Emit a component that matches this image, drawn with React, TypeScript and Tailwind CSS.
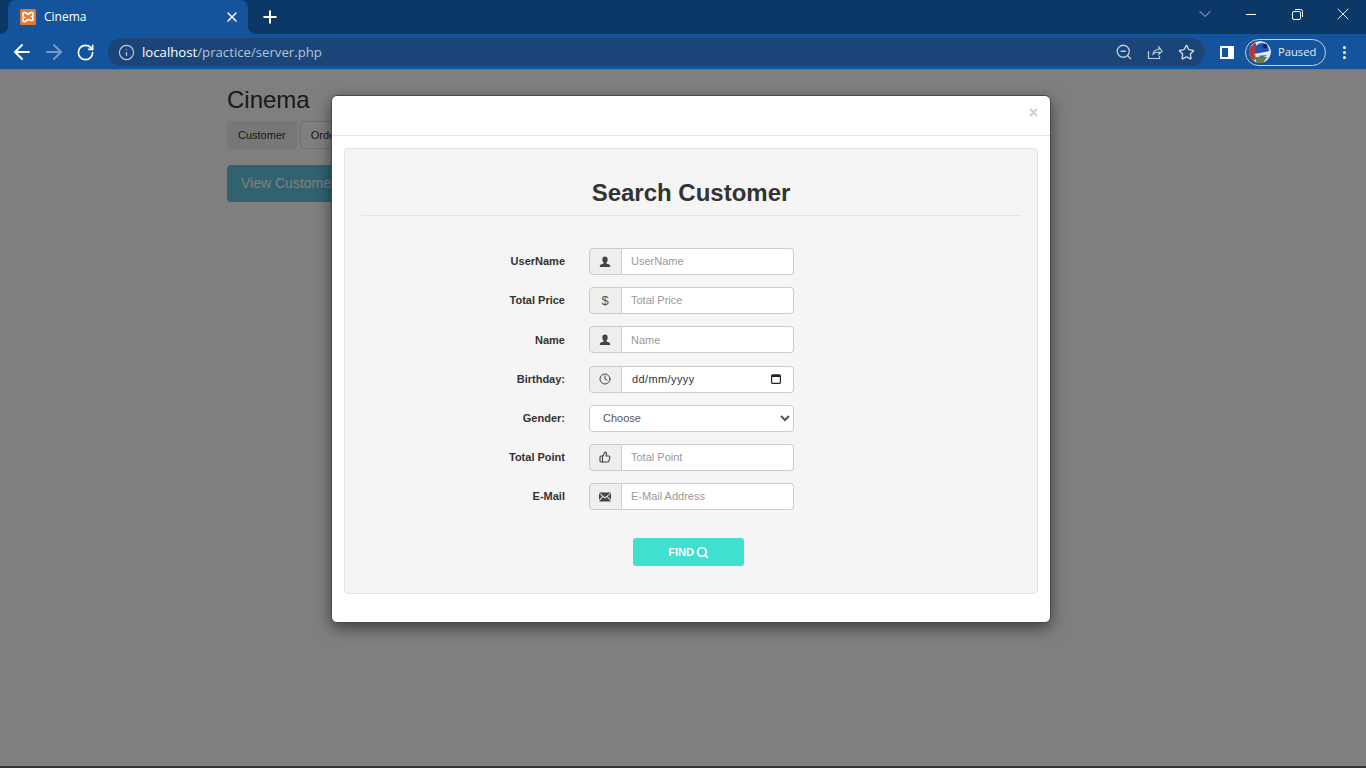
import React from 'react';
import { ArrowLeft, ArrowRight, RotateCw, Info, ZoomOut, Star, ChevronDown, Plus, X, Clock, ThumbsUp, Search } from 'lucide-react';

function UserIcon() {
  return (
    <svg width="12" height="12" viewBox="0 0 12 12" fill="#444">
      <path d="M6 0.5c-1.7 0-2.7 1.2-2.7 2.9 0 1.3.5 2.5 1.3 3.2v.9c-1.4.5-3.6 1-3.8 2.4v1.1h10.4v-1.1c-.2-1.4-2.4-1.9-3.8-2.4v-.9c.8-.7 1.3-1.9 1.3-3.2C8.7 1.7 7.7.5 6 .5z" />
    </svg>
  );
}

function MailIcon() {
  return (
    <svg width="12" height="10" viewBox="0 0 12 10" fill="#444">
      <path d="M0 0.5h12L6 5.2z" />
      <path d="M0 1.6l3.3 2.7L0 8zM12 1.6L8.7 4.3 12 8zM4 4.9l2 1.6 2-1.6L12 9.5H0z" />
    </svg>
  );
}

function CalendarIcon() {
  return (
    <svg width="10" height="10" viewBox="0 0 10 10" fill="none">
      <rect x="0.6" y="0.9" width="8.8" height="8.4" rx="1" stroke="#222" strokeWidth="1.2" />
      <rect x="1" y="1" width="8" height="2" fill="#222" />
    </svg>
  );
}

function Favicon() {
  return (
    <svg width="16" height="16" viewBox="0 0 16 16">
      <rect width="16" height="16" rx="1.5" fill="#e8762b" />
      <path d="M3 4.5c0-1 1.5-1.5 2.5-.8L8 5.5l2.5-1.8c1-.7 2.5-.2 2.5.8v1.5c0 .6-.5 1.2-1.2 1.5.7.3 1.2.9 1.2 1.5v1.5c0 1-1.5 1.5-2.5.8L8 10.5l-2.5 1.8c-1 .7-2.5.2-2.5-.8V10c0-.6.5-1.2 1.2-1.5C3.5 8.2 3 7.6 3 7z" fill="none" stroke="#fff" strokeWidth="1.7" />
    </svg>
  );
}

function Avatar() {
  return (
    <svg width="22" height="22" viewBox="0 0 22 22" className="rounded-full">
      <circle cx="11" cy="11" r="11" fill="#dfe3ea" />
      <path d="M0 8 L6 1 L9 8 L5 20 L0 16z" fill="#b43a32" />
      <circle cx="13" cy="9" r="7" fill="#2350b8" />
      <path d="M5 13 L21 10 L20 14 L7 15z" fill="#e8edf5" />
      <path d="M5 16 L18 16 L14 22 L8 22z" fill="#6d7b3c" />
      <circle cx="16" cy="5" r="2.2" fill="#12245f" />
    </svg>
  );
}

function InputRow({ label, icon, placeholder }: { label: string; icon: React.ReactNode; placeholder: string }) {
  return (
    <div className="flex items-center gap-6">
      <label className="w-[220px] text-right text-[11px] font-bold text-[#333]">{label}</label>
      <div className="flex h-[27px] w-[205px]">
        <span className="flex w-[33px] items-center justify-center rounded-l border border-[#ccc] bg-[#eee] pr-px text-[#555]">{icon}</span>
        <input
          placeholder={placeholder}
          className="min-w-0 flex-1 rounded-r border border-l-0 border-[#ccc] bg-white px-[9px] text-[11px] outline-none placeholder:text-[#999]"
        />
      </div>
    </div>
  );
}

export default function App() {
  return (
    <div className="flex h-screen flex-col overflow-hidden font-['Liberation_Sans',Arial,sans-serif]">
      {/* tab strip */}
      <div className="flex h-[34px] items-end bg-[#0b3866] pl-2">
        <div className="relative flex h-[34px] w-[240px] items-center rounded-t-lg bg-[#14549c] pl-3 pr-[8px] text-white before:absolute before:-left-2 before:bottom-0 before:h-2 before:w-2 before:bg-[radial-gradient(circle_at_0_0,transparent_8px,#14549c_8px)] after:absolute after:-right-2 after:bottom-0 after:h-2 after:w-2 after:bg-[radial-gradient(circle_at_100%_0,transparent_8px,#14549c_8px)]">
          <Favicon />
          <span className="ml-2 flex-1 font-['Open_Sans',sans-serif] text-xs">Cinema</span>
          <X size={16} strokeWidth={2.2} />
        </div>
        <Plus size={20} strokeWidth={2.4} className="mb-[7px] ml-3 text-white" />
        <div className="ml-auto flex h-full items-start">
          <div className="flex h-[28px] w-[46px] items-center justify-center text-[#c9d6e6]"><ChevronDown size={20} strokeWidth={1.1} /></div>
          <div className="flex h-[28px] w-[46px] items-center justify-center"><div className="h-px w-[10px] bg-white" /></div>
          <div className="flex h-[28px] w-[46px] items-center justify-center">
            <svg width="11" height="11" viewBox="0 0 11 11" fill="none" stroke="#fff"><rect x="0.5" y="2.5" width="8" height="8" rx="1.5" /><path d="M3 .5h5.5a2 2 0 0 1 2 2V8" /></svg>
          </div>
          <div className="flex h-[28px] w-[46px] items-center justify-center text-white"><X size={20} strokeWidth={1.1} /></div>
        </div>
      </div>

      {/* toolbar */}
      <div className="flex h-[36px] items-center border-b border-[#5878a4] bg-[#14549c] pt-px text-white">
        <div className="flex w-[108px] items-center pl-[10px]">
          <ArrowLeft size={24} strokeWidth={1.9} />
          <ArrowRight size={24} strokeWidth={1.9} className="ml-2 text-[#7c9ac4]" />
          <RotateCw size={19} strokeWidth={2.1} className="ml-[10px]" />
        </div>
        <div className="flex h-[28px] w-[1097px] items-center rounded-full bg-[#1b4579] pl-[10px] pr-[10px]">
          <Info size={17} strokeWidth={1.7} className="text-[#c0cbd9]" />
          <span className="ml-[7px] flex-1 pt-px font-['Open_Sans',sans-serif] text-[13.2px] text-[#b5c3d6]">
            <span className="font-medium text-white">localhost</span>/practice/server.php
          </span>
          <ZoomOut size={18} strokeWidth={1.7} className="text-[#c0cbd9]" />
          <svg width="16" height="16" viewBox="0 0 16 16" fill="none" stroke="#c0cbd9" strokeWidth="1.2" className="ml-[14px]">
            <path d="M1.5 7v7.5h11V12M6 10c.5-3 3-4.5 6-4.5V3l3 4-3 3.5V8c-2.5 0-4.5.5-6 2z" />
          </svg>
          <Star size={17} strokeWidth={1.8} className="ml-[15px] text-[#d6deea]" />
        </div>
        <div className="ml-[15px] h-[13px] w-[14px] border-[2.5px] border-white bg-[linear-gradient(90deg,#14549c_60%,#fff_60%)]" />
        <div className="ml-[11px] flex h-[27px] w-[81px] items-center rounded-full border border-[#c5d3e6] pl-[3px]">
          <Avatar />
          <span className="ml-[7px] font-['Open_Sans',sans-serif] text-[11.2px] text-[#e4ecf6]">Paused</span>
        </div>
        <div className="ml-[17px] flex flex-col gap-[2px]">
          <i className="h-[3px] w-[3px] rounded-full bg-white" />
          <i className="h-[3px] w-[3px] rounded-full bg-white" />
          <i className="h-[3px] w-[3px] rounded-full bg-white" />
        </div>
      </div>

      {/* page */}
      <div className="relative flex-1 border-b-2 border-[#333] bg-white pl-[227px] pt-4 text-[#333]">
        <h1 className="text-2xl leading-7">Cinema</h1>
        <div className="mt-[7px] flex gap-[3px] text-[11px]">
          <span className="flex h-7 items-center rounded bg-[#eee] px-[11px]">Customer</span>
          <span className="flex h-7 items-center rounded border border-[#ddd] px-[10px]">Order</span>
        </div>
        <button className="mt-4 h-[37px] rounded bg-[#62c4df] px-[14px] pb-[2px] text-sm text-white">View Customer</button>

        {/* modal */}
        <div className="absolute inset-0 flex justify-center bg-black/50 pl-4">
          <div className="mt-[25px] h-fit w-[720px] rounded-md border border-[#4a4a4a] bg-white shadow-[0_5px_15px_rgba(0,0,0,0.5)]">
            <div className="flex h-10 items-center justify-end border-b border-[#e5e5e5] pb-[6px] pr-3 text-base font-bold text-[#ccc]">×</div>
            <div className="px-3 pb-7 pt-3">
              <div className="flex flex-col rounded border border-[#e3e3e3] bg-[#f5f5f5] pb-[27px] pt-[29px]">
                <h2 className="text-center text-2xl font-bold leading-[30px] text-[#333]">Search Customer</h2>
                <div className="mx-4 mb-8 mt-[7px] border-t border-[#e5e5e5]" />
                <div className="flex flex-col gap-[12.2px]">
                  <InputRow label="UserName" placeholder="UserName" icon={<UserIcon />} />
                  <InputRow label="Total Price" placeholder="Total Price" icon={<span className="text-[13px] leading-none">$</span>} />
                  <InputRow label="Name" placeholder="Name" icon={<UserIcon />} />
                  <div className="flex items-center gap-6">
                    <label className="w-[220px] text-right text-[11px] font-bold text-[#333]">Birthday:</label>
                    <div className="flex h-[27px] w-[205px]">
                      <span className="flex w-[33px] items-center justify-center rounded-l border border-[#ccc] bg-[#eee] pr-px text-[#444]"><Clock size={12} strokeWidth={2} /></span>
                      <div className="flex flex-1 items-center justify-between rounded-r border border-l-0 border-[#ccc] bg-white pl-[10px] pr-[12px] text-[11px] tracking-[0.4px] text-[#333]">
                        <span>dd/mm/yyyy</span>
                        <CalendarIcon />
                      </div>
                    </div>
                  </div>
                  <div className="flex items-center gap-6">
                    <label className="w-[220px] text-right text-[11px] font-bold text-[#333]">Gender:</label>
                    <select className="h-[27px] w-[205px] rounded border border-[#ccc] bg-white pl-[9px] text-[11px] text-[#555]">
                      <option>Choose</option>
                    </select>
                  </div>
                  <InputRow label="Total Point" placeholder="Total Point" icon={<ThumbsUp size={12} strokeWidth={2.2} className="text-[#444]" />} />
                  <InputRow label="E-Mail" placeholder="E-Mail Address" icon={<MailIcon />} />
                </div>
                <button className="ml-[288px] mt-7 flex h-7 w-[111px] items-center justify-center gap-[2px] rounded-[3px] bg-[#40e0d0] text-[11px] font-bold text-white">
                  FIND <Search size={13} strokeWidth={3.4} />
                </button>
              </div>
            </div>
          </div>
        </div>
      </div>
    </div>
  );
}
